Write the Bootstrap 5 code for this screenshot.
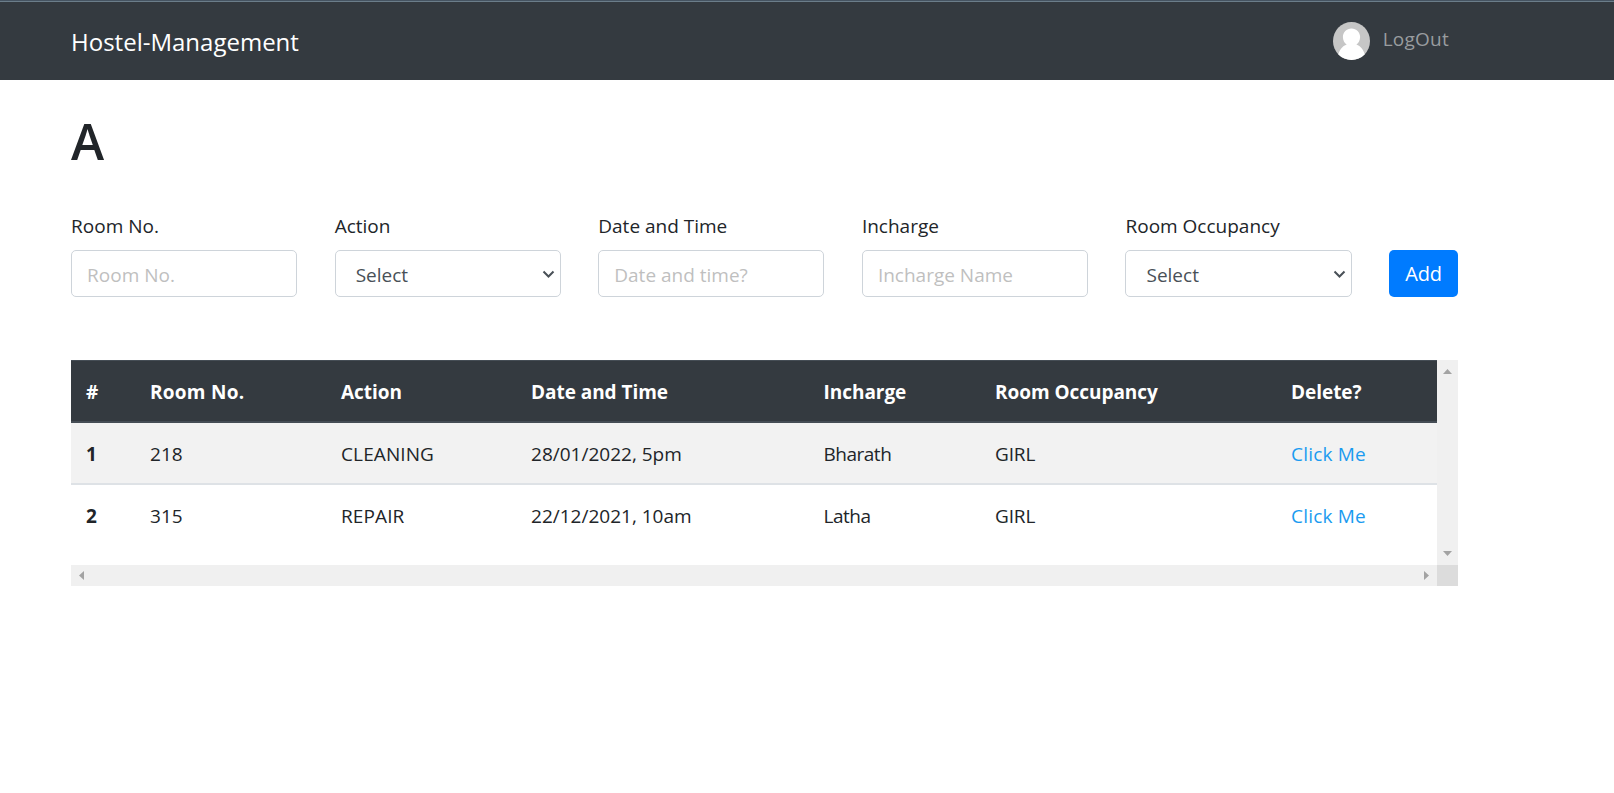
<!DOCTYPE html>
<html lang="en">
<head>
<meta charset="utf-8">
<meta name="viewport" content="width=device-width, initial-scale=1">
<title>Hostel-Management</title>
<link href="https://cdn.jsdelivr.net/npm/bootstrap@5.3.0/dist/css/bootstrap.min.css" rel="stylesheet">
<style>
  body { font-family: "Open Sans", "Noto Sans", sans-serif; font-size: 19px; line-height: 30px; letter-spacing: 0; color: #212529; background: #fff; }
  .page-shell { width: 1424.5px; margin-left: 52.3px; padding: 0 18.75px; }
  .topbar { height: 80px; padding: 0; background: #343a40; border-top: 1px solid #455361; box-shadow: inset 0 1px #6b7d8a; }
  .topbar .navbar-brand { font-size: 24px; line-height: 37px; letter-spacing: 0; padding: 0; margin: 2px 0 0; color: #fff; }
  .logout { color: #999c9f; text-decoration: none; letter-spacing: .25px; margin: 0 9px 3px 13px; }
  .block-title { font-size: 50px; line-height: 60px; font-weight: 600; letter-spacing: 0; margin: 31px 0 40px; }
  .entry-form { gap: 37.5px; }
  .entry-field { width: 226.2px; }
  .entry-form label { line-height: 30px; margin-bottom: 9px; display: block; }
  .entry-form .form-control, .entry-form .form-select { height: 47px; font-size: 19px; letter-spacing: inherit; line-height: 30px; padding: 9px 15px 7px; border: 1px solid #ced4da; border-radius: 5px; color: #495057; background-color: #fff; }
  .entry-form .form-select { padding-left: 20px; background-size: 13px 9px; background-position: right 5px top 19px;
    background-image: url("data:image/svg+xml,%3csvg xmlns='http://www.w3.org/2000/svg' viewBox='0 0 13 9'%3e%3cpath fill='none' stroke='%23495057' stroke-width='2' d='M1.5 1.5l5 5 5-5'/%3e%3c/svg%3e"); }
  .entry-form .form-control::placeholder { color: #bfbfbf; opacity: 1; }
  .add-btn { width: 69px; height: 47px; padding: 0; border: 0; border-radius: 5px; background: #007bff; font-size: 20px; letter-spacing: -.1px; }
  .log-frame { display: grid; grid-template: 205px 21px / 1fr 21px; margin-top: 63px; }
  .log-table { table-layout: fixed; width: 1366px; margin: 0; color: #212529; border-collapse: separate; border-spacing: 0; }
  .log-table > :not(caption) > * > * { padding: 16px 15px 14px; line-height: 30px; height: 62px; box-shadow: none; border: 0; white-space: nowrap; color: #212529; background: #fff; }
  .log-table > thead > tr > th { height: 63px; color: #fff; background: #343a40; border-top: 1px solid #454d55; border-bottom: 2px solid #454d55; }
  .log-table > tbody > tr.room-row:first-child > * { background: #f2f2f2; border-bottom: 2px solid #dee2e6; }
  .log-table th { font-weight: 700; letter-spacing: -.05px; }
  .log-table th:nth-child(2) { letter-spacing: .25px; }
  .log-table td:nth-child(3) { letter-spacing: .1px; }
  .log-table td:nth-child(5) { letter-spacing: -.5px; }
  .log-table td:nth-child(6) { letter-spacing: -.15px; }
  .log-table td:nth-child(7) { letter-spacing: .2px; }
  .log-table a { color: #1a9bf0; text-decoration: none; }
  .track { background: #f0f0f0; color: #a3a3a3; }
  .track-corner { background: #dcdcdc; }
  .track svg { display: block; fill: currentColor; }
</style>
</head>
<body>
<nav class="navbar topbar">
  <div class="page-shell d-flex align-items-center justify-content-between">
    <a class="navbar-brand" href="#">Hostel-Management</a>
    <div class="d-flex align-items-center">
      <svg width="37" height="38" viewBox="0 0 37 38" aria-hidden="true">
        <defs><clipPath id="disc"><ellipse cx="18.5" cy="19" rx="18.5" ry="19"/></clipPath></defs>
        <g clip-path="url(#disc)">
          <rect width="37" height="38" fill="#c6c6c6"/>
          <path fill="#fff" d="M18.5 6.500c5 0 8.600 3.800 8.600 8.400 0 3.200-1.500 6-3.700 7.600 4.300 1.500 7.400 5.500 8.700 11V40H5v-6.500c1.300-5.500 4.400-9.500 8.700-11-2.300-1.600-3.800-4.400-3.800-7.600 0-4.600 3.600-8.400 8.600-8.400z"/>
        </g>
      </svg>
      <a class="logout" href="#">LogOut</a>
    </div>
  </div>
</nav>
<main class="page-shell">
  <h1 class="block-title">A</h1>
  <form class="entry-form d-flex align-items-end">
    <div class="entry-field"><label for="room">Room No.</label><input id="room" class="form-control" placeholder="Room No."></div>
    <div class="entry-field"><label for="action">Action</label><select id="action" class="form-select"><option>Select</option></select></div>
    <div class="entry-field"><label for="when">Date and Time</label><input id="when" class="form-control" placeholder="Date and time?"></div>
    <div class="entry-field"><label for="who">Incharge</label><input id="who" class="form-control" placeholder="Incharge Name"></div>
    <div class="entry-field"><label for="occ">Room Occupancy</label><select id="occ" class="form-select"><option>Select</option></select></div>
    <button type="button" class="btn btn-primary add-btn">Add</button>
  </form>
  <div class="log-frame">
    <div class="overflow-hidden">
      <table class="table log-table">
        <colgroup><col style="width:64px"><col style="width:191px"><col style="width:190px"><col style="width:292.500px"><col style="width:171.500px"><col style="width:296px"><col></colgroup>
        <thead><tr><th>#</th><th>Room No.</th><th>Action</th><th>Date and Time</th><th>Incharge</th><th>Room Occupancy</th><th>Delete?</th></tr></thead>
        <tbody>
          <tr class="room-row"><th>1</th><td>218</td><td>CLEANING</td><td>28/01/2022, 5pm</td><td>Bharath</td><td>GIRL</td><td><a href="#">Click Me</a></td></tr>
          <tr class="room-row"><th>2</th><td>315</td><td>REPAIR</td><td>22/12/2021, 10am</td><td>Latha</td><td>GIRL</td><td><a href="#">Click Me</a></td></tr>
        </tbody>
      </table>
    </div>
    <div class="track d-flex flex-column justify-content-between">
      <svg width="21" height="21"><path d="M6 14h9l-4.500-5z"/></svg>
      <svg width="21" height="21"><path d="M6 7h9l-4.500 5z"/></svg>
    </div>
    <div class="track d-flex justify-content-between">
      <svg width="21" height="21"><path d="M13 6v9l-5-4.500z"/></svg>
      <svg width="21" height="21"><path d="M8 6v9l5-4.500z"/></svg>
    </div>
    <div class="track-corner"></div>
  </div>
</main>
<script src="https://cdn.jsdelivr.net/npm/bootstrap@5.3.0/dist/js/bootstrap.bundle.min.js"></script>
</body>
</html>
